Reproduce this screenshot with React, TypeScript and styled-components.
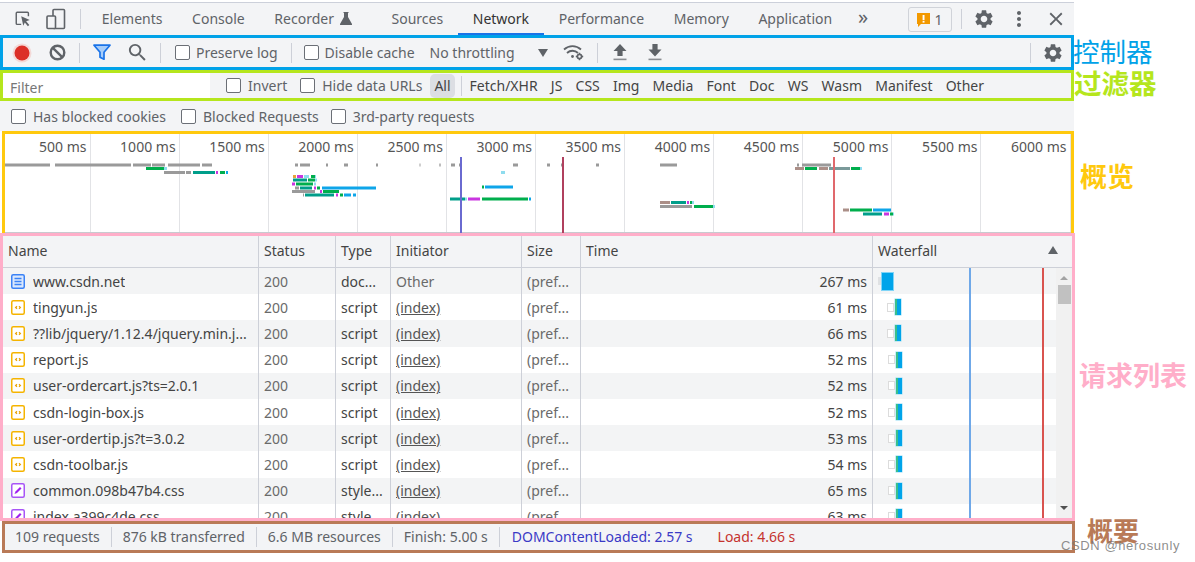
import React from "react";
import styled, { createGlobalStyle } from "styled-components";
import { MdSettings, MdClose, MdMoreVert, MdSearch } from "react-icons/md";

const Global = createGlobalStyle`
  html, body { margin: 0; padding: 0; background: #fff; }
  body { font-family: "Noto Sans", "Liberation Sans", sans-serif; font-size: 14px; color: #555; overflow: hidden; }
`;

const PANEL = "#f3f4f6";
const LINE = "#cdd0d8";

const Page = styled.div`
  position: relative;
  width: 1195px;
  height: 562px;
  padding-top: 2px;
  box-sizing: border-box;
  overflow: hidden;
`;
const Band = styled.div<{ $h: number }>`
  display: flex;
  height: ${(p) => p.$h}px;
  width: 1195px;
`;
const Framed = styled.div<{ $c: string; $w?: number; $ml?: number; $open?: boolean }>`
  box-sizing: border-box;
  width: ${(p) => p.$w ?? 1074}px;
  margin-left: ${(p) => p.$ml ?? 0}px;
  flex: none;
  border: 3px solid ${(p) => p.$c};
  border-bottom-width: ${(p) => (p.$open ? 0 : 3)}px;
  background: ${PANEL};
  display: flex;
  align-items: center;
  overflow: hidden;
`;
const Note = styled.div<{ $c: string; $s: number; $b?: boolean; $ml: number; $mt: number }>`
  font-family: "Noto Sans CJK SC", sans-serif;
  color: ${(p) => p.$c};
  font-size: ${(p) => p.$s}px;
  font-weight: ${(p) => (p.$b ? 700 : 400)};
  line-height: 1;
  margin-left: ${(p) => p.$ml}px;
  margin-top: ${(p) => p.$mt}px;
  white-space: nowrap;
`;

/* top tabs */
const TopBar = styled.div`
  width: 1074px;
  height: 33px;
  box-sizing: border-box;
  border-top: 1px solid #ccd0da;
  background: ${PANEL};
  display: flex;
  align-items: center;
`;
const Tab = styled.div<{ $active?: boolean; $extra?: number }>`
  flex: none;
  height: 32px;
  box-sizing: border-box;
  padding: 0 ${(p) => 14.8 + (p.$extra ?? 0)}px 0 14.8px;
  display: flex;
  align-items: center;
  gap: 6px;
  color: ${(p) => (p.$active ? "#333" : "#5f6368")};
  border-bottom: 2px solid ${(p) => (p.$active ? "#1a73e8" : "transparent")};
`;
const MoreTabs = styled.span`
  flex: none;
  margin-left: 11px;
  font-size: 20px;
  line-height: 1;
  padding-bottom: 4px;
  color: #5f6368;
`;
const IconSlot = styled.span<{ $w: number; $c?: string; $ml?: number }>`
  flex: none;
  width: ${(p) => p.$w}px;
  margin-left: ${(p) => p.$ml ?? 0}px;
  display: flex;
  align-items: center;
  justify-content: center;
  color: ${(p) => p.$c ?? "#5f6368"};
`;
const Sep = styled.span<{ $ml?: number; $mr?: number }>`
  flex: none;
  width: 1px;
  height: 20px;
  background: #cdd0d8;
  margin-left: ${(p) => p.$ml ?? 0}px;
  margin-right: ${(p) => p.$mr ?? 0}px;
`;
const Badge = styled.div`
  flex: none;
  width: 44px;
  height: 25px;
  box-sizing: border-box;
  border: 1px solid #d0d3d9;
  border-radius: 3px;
  display: flex;
  align-items: center;
  justify-content: center;
  gap: 4px;
  color: #5f6368;
`;
const Spacer = styled.span`
  flex: 1;
`;

/* checkboxes and labels */
const Check = styled.label<{ $ml?: number; $gap?: number }>`
  flex: none;
  display: flex;
  align-items: center;
  gap: ${(p) => p.$gap ?? 7}px;
  margin-left: ${(p) => p.$ml ?? 0}px;
  color: #5f6368;
  white-space: nowrap;
`;
const Square = styled.span`
  flex: none;
  width: 13px;
  height: 13px;
  border: 1px solid #6b6f76;
  border-radius: 2px;
  background: #fff;
`;
const Plain = styled.span<{ $ml?: number; $w?: number }>`
  flex: none;
  margin-left: ${(p) => p.$ml ?? 0}px;
  width: ${(p) => (p.$w ? p.$w + "px" : "auto")};
  white-space: nowrap;
  color: #5f6368;
`;
const Caret = styled.span`
  flex: none;
  width: 0;
  height: 0;
  border-left: 5px solid transparent;
  border-right: 5px solid transparent;
  border-top: 8px solid #5f6368;
`;

/* filter row */
const FilterInput = styled.div`
  flex: none;
  width: 207px;
  height: 100%;
  box-sizing: border-box;
  padding: 3px 0 0 7px;
  background: #fff;
  color: #777;
  display: flex;
  align-items: center;
`;
const Chip = styled.span<{ $on?: boolean }>`
  flex: none;
  height: 24px;
  display: flex;
  align-items: center;
  padding: 0 ${(p) => (p.$on ? 4 : 6.6)}px;
  border-radius: 5px;
  background: ${(p) => (p.$on ? "#dcdee3" : "transparent")};
  color: #444;
`;
const BlockedRow = styled.div`
  width: 1074px;
  height: 30px;
  box-sizing: border-box;
  background: ${PANEL};
  display: flex;
  align-items: center;
  padding-left: 11px;
`;

/* overview */
const Overview = styled.div`
  position: relative;
  flex: 1;
  height: 100%;
  background: #fff;
  display: grid;
  grid-template-columns: 85.5px repeat(11, 89.1px);
  border-bottom: 1px solid #c8cad0;
  box-sizing: border-box;
  align-self: stretch;
`;
const TimeCol = styled.div`
  border-right: 1px solid #e2e3e6;
  text-align: right;
  padding: 3px 3px 0 0;
  box-sizing: border-box;
  color: #555;
  white-space: nowrap;
  line-height: 20px;
`;
const OverlaySvg = styled.svg`
  position: absolute;
  left: 0;
  top: 0;
`;

/* table */
const Table = styled.div`
  flex: 1;
  align-self: stretch;
  display: flex;
  flex-direction: column;
  min-width: 0;
  background: #fff;
`;
const COLS = "255px 77px 55px 131px 59px 292px 1fr";
const HeadRow = styled.div`
  flex: none;
  height: 32px;
  box-sizing: border-box;
  display: grid;
  grid-template-columns: ${COLS};
  background: ${PANEL};
  border-bottom: 1px solid ${LINE};
  color: #444;
`;
const HeadCell = styled.div<{ $first?: boolean }>`
  display: flex;
  align-items: center;
  justify-content: space-between;
  padding: 0 14px 3px 5px;
  border-left: ${(p) => (p.$first ? "none" : `1px solid ${LINE}`)};
`;
const Body = styled.div`
  position: relative;
  flex: 1;
  min-height: 0;
  display: flex;
  overflow: hidden;
`;
const Rows = styled.div`
  flex: 1;
  min-width: 0;
`;
const Row = styled.div<{ $odd: boolean }>`
  height: 26.2px;
  display: grid;
  grid-template-columns: ${COLS};
  background: ${(p) => (p.$odd ? "#f3f4f5" : "#fff")};
`;
const Cell = styled.div<{ $first?: boolean; $right?: boolean; $dark?: boolean }>`
  display: flex;
  align-items: center;
  justify-content: ${(p) => (p.$right ? "flex-end" : "flex-start")};
  padding: 0 5px;
  gap: 8px;
  min-width: 0;
  white-space: nowrap;
  overflow: hidden;
  color: ${(p) => (p.$dark ? "#444" : "#6a6a6a")};
  border-left: ${(p) => (p.$first ? "none" : `1px solid ${LINE}`)};
`;
const Initiator = styled.span`
  text-decoration: underline;
  color: #555;
`;
const NameText = styled.span`
  color: #444;
  overflow: hidden;
  text-overflow: ellipsis;
`;
const FileIcon = styled.svg`
  flex: none;
  margin-left: 3px;
`;
const WaterCell = styled.div`
  border-left: 1px solid ${LINE};
  display: flex;
  align-items: center;
  min-width: 0;
`;
const Queue = styled.span<{ $ml: number }>`
  flex: none;
  width: 7px;
  height: 9px;
  margin-left: ${(p) => p.$ml}px;
  margin-right: 1px;
  border: 1px solid #dcdcdc;
  box-sizing: border-box;
  background: #fff;
`;
const Receive = styled.span`
  flex: none;
  width: 6px;
  height: 16px;
  box-sizing: border-box;
  border-left: 2px solid #3dbf8a;
  background: #00a4ea;
  box-shadow: 0 0 0 0.5px #8fdcf5;
`;
const Main = styled.span`
  flex: none;
  width: 11px;
  height: 17px;
  margin-left: 1px;
  background: #00a4ea;
  box-shadow: 0 0 0 1px #7fd4f7;
`;
const Stalled = styled.span`
  flex: none;
  width: 3px;
  height: 8px;
  margin-left: 5px;
  background: #dfe1e3;
`;
const Marker = styled.div<{ $x: number; $c: string }>`
  position: absolute;
  top: 0;
  bottom: 0;
  left: ${(p) => p.$x}px;
  width: 2px;
  background: ${(p) => p.$c};
`;
const Scrollbar = styled.div`
  flex: none;
  width: 16px;
  background: #f1f1f1;
  display: flex;
  flex-direction: column;
  align-items: center;
  justify-content: space-between;
  position: relative;
  padding: 8px 0 8px;
  box-sizing: border-box;
`;
const ScrollThumb = styled.div`
  position: absolute;
  left: 2px;
  top: 17px;
  width: 13px;
  height: 19px;
  background: #c1c1c1;
`;
const ArrowUp = styled.span`
  width: 0;
  height: 0;
  border-left: 4px solid transparent;
  border-right: 4px solid transparent;
  border-bottom: 4px solid #a3a3a3;
`;
const ArrowDown = styled.span`
  width: 0;
  height: 0;
  border-left: 4px solid transparent;
  border-right: 4px solid transparent;
  border-top: 4px solid #505050;
`;
const SortArrow = styled.span`
  width: 0;
  height: 0;
  border-left: 5px solid transparent;
  border-right: 5px solid transparent;
  border-bottom: 8px solid #5f6368;
`;

/* summary */
const SummaryItem = styled.span<{ $c?: string; $sep?: boolean; $pl?: number; $pr?: number }>`
  flex: none;
  padding: 0 ${(p) => p.$pr ?? 11}px 0 ${(p) => p.$pl ?? 11}px;
  height: 20px;
  line-height: 20px;
  color: ${(p) => p.$c ?? "#5f6368"};
  border-right: ${(p) => (p.$sep ? `1px solid ${LINE}` : "none")};
  white-space: nowrap;
`;
const Watermark = styled.div`
  position: absolute;
  left: 1061px;
  top: 538px;
  font-family: "Liberation Sans", sans-serif;
  font-size: 13px;
  letter-spacing: 0.6px;
  color: rgba(120, 120, 120, 0.85);
  white-space: nowrap;
`;

const InspectIcon = () => (
  <svg width="18" height="18" viewBox="0 0 20 20" fill="none">
    <path d="M8 16H3.5a1 1 0 0 1-1-1V3.5a1 1 0 0 1 1-1H15a1 1 0 0 1 1 1V7" stroke="#5f6368" strokeWidth="1.6" />
    <path d="M8 7l9.5 4-4 1.6 3.5 4-1.6 1.4-3.4-4-1.7 3.6z" fill="#5f6368" />
  </svg>
);
const DeviceIcon = () => (
  <svg width="20" height="22" viewBox="0 0 20 22" fill="none" stroke="#5f6368" strokeWidth="1.6">
    <rect x="7" y="1.5" width="11.5" height="19" rx="1" />
    <rect x="1" y="8" width="8.5" height="12.5" rx="1" fill={PANEL} />
  </svg>
);
const Flask = () => (
  <svg width="12" height="13" viewBox="0 0 12 13">
    <path d="M3.5 0h5v1H8v4l4 7a.7.7 0 0 1-.6 1H.6a.7.7 0 0 1-.6-1l4-7V1h-.5z" fill="#5f6368" />
  </svg>
);
const IssueIcon = () => (
  <svg width="13" height="15" viewBox="0 0 13 15">
    <path d="M0 1h13v11H4l-3 3v-3H0z" fill="#f29900" />
    <rect x="5.6" y="3" width="1.9" height="5" fill="#fff" />
    <rect x="5.6" y="8.8" width="1.9" height="1.8" fill="#fff" />
  </svg>
);
const RecordIcon = () => (
  <svg width="20" height="20" viewBox="0 0 20 20">
    <circle cx="10" cy="10" r="9.5" fill="#f4c7c3" opacity="0.6" />
    <circle cx="10" cy="10" r="7.5" fill="#dc2f27" />
  </svg>
);
const ClearIcon = () => (
  <svg width="17" height="17" viewBox="0 0 17 17" fill="none" stroke="#5f6368" strokeWidth="2.4">
    <circle cx="8.5" cy="8.5" r="6.8" />
    <path d="M3.8 3.8l9.4 9.4" />
  </svg>
);
const FunnelIcon = () => (
  <svg width="18" height="17" viewBox="0 0 18 17">
    <path d="M1 1.2h16l-6 7v7l-4-2v-5z" fill="#a6cdfa" stroke="#1a73e8" strokeWidth="1.7" strokeLinejoin="round" />
  </svg>
);
const WifiGearIcon = () => (
  <svg width="22" height="17" viewBox="0 0 22 17" fill="none" stroke="#5f6368" strokeWidth="1.8">
    <path d="M1 5.5c5-4.6 12-4.6 17 0" />
    <path d="M4 9c3.2-3 8-3 11 0" />
    <circle cx="9.5" cy="12.5" r="1.4" fill="#5f6368" stroke="none" />
    <circle cx="16.5" cy="12.5" r="2.1" strokeWidth="1.7" />
    <path d="M16.5 8.8v1.4M16.5 14.8v1.4M12.8 12.5h1.4M18.8 12.5h1.4" strokeWidth="1.4" />
  </svg>
);
const UploadIcon = () => (
  <svg width="14" height="17" viewBox="0 0 14 17">
    <path d="M7 0l6.5 7H9.6v5H4.4V7H.5z" fill="#5f6368" />
    <rect x="0.5" y="14.6" width="13" height="1.6" fill="#8a8d92" />
  </svg>
);
const DownloadIcon = () => (
  <svg width="14" height="17" viewBox="0 0 14 17">
    <path d="M7 12.5L.5 5.5h3.9V0h5.2v5.5h3.9z" fill="#5f6368" />
    <rect x="0.5" y="14.6" width="13" height="1.6" fill="#8a8d92" />
  </svg>
);
const DocIcon = () => (
  <FileIcon width="14" height="15" viewBox="0 0 14 15">
    <rect x="0.75" y="0.75" width="12.5" height="13.5" rx="1.5" fill="#dbe8fd" stroke="#3b82f6" strokeWidth="1.5" />
    <path d="M3.5 4.5h7M3.5 7.5h7M3.5 10.5h7" stroke="#3b82f6" strokeWidth="1.3" />
  </FileIcon>
);
const ScriptIcon = () => (
  <FileIcon width="14" height="15" viewBox="0 0 14 15">
    <rect x="0.75" y="0.75" width="12.5" height="13.5" rx="1.5" fill="#fff" stroke="#f5b400" strokeWidth="1.5" />
    <path d="M6 6.2L4.6 7.5 6 8.8M8 6.2l1.4 1.3L8 8.8" fill="none" stroke="#e8a200" strokeWidth="1.2" />
  </FileIcon>
);
const CssIcon = () => (
  <FileIcon width="14" height="15" viewBox="0 0 14 15">
    <rect x="0.75" y="0.75" width="12.5" height="13.5" rx="1.5" fill="#fff" stroke="#a855f7" strokeWidth="1.5" />
    <path d="M3.5 11l1-2.5 4.5-4.5 1.5 1.5L6 10z" fill="#a020f0" />
  </FileIcon>
);

type Kind = "doc" | "script" | "css";
const rows: { n: string; t: string; i: string; ms: string; k: Kind }[] = [
  { n: "www.csdn.net", t: "doc...", i: "Other", ms: "267 ms", k: "doc" },
  { n: "tingyun.js", t: "script", i: "(index)", ms: "61 ms", k: "script" },
  { n: "??lib/jquery/1.12.4/jquery.min.j...", t: "script", i: "(index)", ms: "66 ms", k: "script" },
  { n: "report.js", t: "script", i: "(index)", ms: "52 ms", k: "script" },
  { n: "user-ordercart.js?ts=2.0.1", t: "script", i: "(index)", ms: "52 ms", k: "script" },
  { n: "csdn-login-box.js", t: "script", i: "(index)", ms: "52 ms", k: "script" },
  { n: "user-ordertip.js?t=3.0.2", t: "script", i: "(index)", ms: "53 ms", k: "script" },
  { n: "csdn-toolbar.js", t: "script", i: "(index)", ms: "54 ms", k: "script" },
  { n: "common.098b47b4.css", t: "style...", i: "(index)", ms: "65 ms", k: "css" },
  { n: "index.a399c4de.css", t: "style...", i: "(index)", ms: "63 ms", k: "css" },
];
const waterOffsets = [0, 14, 14, 15, 15, 15, 15, 15, 15, 15];

const GRAY = "#9a9a9a";
const TEAL = "#009e8a";
const GREEN = "#00ae4d";
const BLUE = "#0ea5e9";
const PURPLE = "#c935e0";
const BROWN = "#ab8f88";
const LIGHT = "#8fdcee";
// x1, x2, y, colour (page coordinates)
const bars: [number, number, number, string][] = [
  [5, 50, 165, GRAY], [55, 131, 165, GRAY], [133, 151, 165, GRAY], [152, 165, 165, GRAY], [168, 200, 165, GRAY], [202, 212, 165, GRAY],
  [146, 164, 168.5, GREEN], [164, 167, 168.5, LIGHT],
  [164, 185, 172.5, GRAY], [186, 191, 172.5, GRAY], [193, 215, 172.5, TEAL], [216, 218, 172.5, PURPLE], [220, 225, 172.5, GREEN], [226, 228, 172.5, BLUE],
  [295, 298, 165, GRAY], [300, 310, 165, GRAY], [326, 328, 165, GRAY], [344, 348, 165, GRAY], [376, 378, 165, GRAY],
  [293, 296, 176.5, "#e6a23c"], [297, 303, 176.5, PURPLE], [304, 309, 176.5, LIGHT], [311, 315, 176.5, GREEN], [315, 316, 176.5, LIGHT],
  [293, 307, 180, TEAL], [308, 315, 180, GREEN], [315, 317, 180, LIGHT],
  [292, 295, 184, PURPLE], [296, 313, 184, GREEN], [314, 316, 184, LIGHT],
  [295, 299, 188, GRAY], [300, 312, 188, TEAL], [314, 316, 188, PURPLE], [317, 320, 188, GREEN], [322, 376, 188, BLUE],
  [292, 315, 191.5, GRAY], [320, 322, 191.5, PURPLE], [323, 339, 191.5, GREEN],
  [303, 304, 195, GRAY], [305, 334, 195, TEAL], [336, 338, 195, PURPLE], [340, 343, 195, GREEN], [344, 351, 195, BLUE], [353, 356, 195, BLUE],
  [419, 421, 165, "#cfcfcf"], [439, 441, 165, "#bdbdbd"], [451, 455, 165, GRAY], [459, 461, 165, GRAY], [513, 518, 165, GRAY], [547, 550, 165, GRAY], [561, 563, 165, GRAY], [596, 599, 165, GRAY], [660, 677, 165, GRAY],
  [501, 505, 172.5, LIGHT],
  [482, 484, 187, GREEN], [485, 513, 187, BLUE],
  [450, 465, 199, TEAL], [465, 467, 199, LIGHT], [468, 480, 199, PURPLE], [482, 528, 199, GREEN], [529, 531, 199, BLUE],
  [660, 670, 202.5, BROWN], [671, 686, 202.5, TEAL], [687, 689, 202.5, PURPLE], [690, 692, 202.5, GREEN], [692, 694, 202.5, LIGHT],
  [660, 692, 206.5, GRAY], [694, 713, 206.5, GREEN], [713, 715, 206.5, LIGHT],
  [797, 799, 165, GRAY], [802, 831, 165, GRAY],
  [795, 804, 168.5, BROWN], [805, 817, 168.5, GREEN], [819, 828, 168.5, BROWN], [829, 850, 168.5, "#7a9a9a"], [851, 860, 168.5, GREEN], [860, 862, 168.5, LIGHT],
  [843, 849, 210, BROWN], [850, 872, 210, GREEN], [873, 891, 210, BLUE],
  [863, 882, 214, TEAL], [884, 889, 214, PURPLE], [890, 893, 214, GREEN], [893, 894, 214, LIGHT],
];
const times = [500, 1000, 1500, 2000, 2500, 3000, 3500, 4000, 4500, 5000, 5500, 6000];

export default function App() {
  return (
    <Page>
      <Global />
      <TopBar>
        <IconSlot $w={45}><InspectIcon /></IconSlot>
        <IconSlot $w={21}><DeviceIcon /></IconSlot>
        <Sep $ml={14} $mr={6} />
        <Tab>Elements</Tab>
        <Tab>Console</Tab>
        <Tab $extra={10}>Recorder <Flask /></Tab>
        <Tab>Sources</Tab>
        <Tab $active>Network</Tab>
        <Tab>Performance</Tab>
        <Tab>Memory</Tab>
        <Tab>Application</Tab>
        <MoreTabs>»</MoreTabs>
        <Spacer />
        <Badge><IssueIcon />1</Badge>
        <Sep $ml={9} />
        <IconSlot $w={44}><MdSettings size={22} /></IconSlot>
        <IconSlot $w={26}><MdMoreVert size={24} /></IconSlot>
        <IconSlot $w={22} $ml={13}><MdClose size={22} /></IconSlot>
        <IconSlot $w={7} />
      </TopBar>

      <Band $h={35}>
        <Framed $c="#00a2e8">
          <IconSlot $w={38}><RecordIcon /></IconSlot>
          <IconSlot $w={32}><ClearIcon /></IconSlot>
          <Sep $ml={6} />
          <IconSlot $w={44}><FunnelIcon /></IconSlot>
          <IconSlot $w={26}><MdSearch size={23} /></IconSlot>
          <Sep $ml={10} />
          <Check $ml={14} $gap={6}><Square />Preserve log</Check>
          <Sep $ml={13} />
          <Check $ml={12} $gap={6}><Square />Disable cache</Check>
          <Plain $ml={15} $w={108}>No throttling</Plain>
          <Caret />
          <IconSlot $w={46} $ml={3}><WifiGearIcon /></IconSlot>
          <Sep />
          <IconSlot $w={44}><UploadIcon /></IconSlot>
          <IconSlot $w={26}><DownloadIcon /></IconSlot>
          <Spacer />
          <Sep />
          <IconSlot $w={36} $ml={4}><MdSettings size={22} /></IconSlot>
        </Framed>
        <Note $c="#00a2e8" $s={26.5} $mt={3} $ml={-1}>控制器</Note>
      </Band>

      <Band $h={31}>
        <Framed $c="#b5e61d">
          <FilterInput>Filter</FilterInput>
          <Check $ml={16}><Square />Invert</Check>
          <Check $ml={13}><Square />Hide data URLs</Check>
          <Plain $ml={8} />
          <Chip $on>All</Chip>
          <Sep $ml={6} $mr={1.4} />
          <Chip>Fetch/XHR</Chip>
          <Chip>JS</Chip>
          <Chip>CSS</Chip>
          <Chip>Img</Chip>
          <Chip>Media</Chip>
          <Chip>Font</Chip>
          <Chip>Doc</Chip>
          <Chip>WS</Chip>
          <Chip>Wasm</Chip>
          <Chip>Manifest</Chip>
          <Chip>Other</Chip>
        </Framed>
        <Note $c="#b5e61d" $s={27.5} $b $ml={0} $mt={-1}>过滤器</Note>
      </Band>

      <BlockedRow>
        <Check><Square />Has blocked cookies</Check>
        <Check $ml={15}><Square />Blocked Requests</Check>
        <Check $ml={12}><Square />3rd-party requests</Check>
      </BlockedRow>

      <Band $h={102}>
        <Framed $c="#ffc90e" $w={1072} $ml={2} $open>
          <Overview>
            {times.map((t) => (
              <TimeCol key={t}>{t} ms</TimeCol>
            ))}
            <OverlaySvg width="1065" height="99" viewBox="5 134 1065 99">
              {bars.map(([a, b, y, c], i) => (
                <rect key={i} x={a} y={y - 1.5} width={b - a} height={3} fill={c} />
              ))}
              <rect x="460" y="157" width="2" height="76" fill="#6a6ad0" />
              <rect x="562" y="157" width="2" height="76" fill="#b0405e" />
              <rect x="833" y="157" width="2" height="76" fill="#e0686c" />
            </OverlaySvg>
          </Overview>
        </Framed>
        <Note $c="#ffc90e" $s={27} $b $ml={6} $mt={31}>概览</Note>
      </Band>

      <Band $h={288}>
        <Framed $c="#ffaec9" $w={1075}>
          <Table>
            <HeadRow>
              <HeadCell $first>Name</HeadCell>
              <HeadCell>Status</HeadCell>
              <HeadCell>Type</HeadCell>
              <HeadCell>Initiator</HeadCell>
              <HeadCell>Size</HeadCell>
              <HeadCell>Time</HeadCell>
              <HeadCell>Waterfall<SortArrow /></HeadCell>
            </HeadRow>
            <Body>
              <Rows>
                {rows.map((r, i) => (
                  <Row key={r.n} $odd={i % 2 === 0}>
                    <Cell $first>
                      {r.k === "doc" ? <DocIcon /> : r.k === "script" ? <ScriptIcon /> : <CssIcon />}
                      <NameText>{r.n}</NameText>
                    </Cell>
                    <Cell>200</Cell>
                    <Cell $dark>{r.t}</Cell>
                    <Cell>{i === 0 ? r.i : <Initiator>{r.i}</Initiator>}</Cell>
                    <Cell>(pref...</Cell>
                    <Cell $right $dark>{r.ms}</Cell>
                    <WaterCell>
                      {i === 0 ? (
                        <>
                          <Stalled />
                          <Main />
                        </>
                      ) : (
                        <>
                          <Queue $ml={waterOffsets[i]} />
                          <Receive />
                        </>
                      )}
                    </WaterCell>
                  </Row>
                ))}
              </Rows>
              <Scrollbar>
                <ArrowUp />
                <ScrollThumb />
                <ArrowDown />
              </Scrollbar>
              <Marker $x={966} $c="#6fa8e8" />
              <Marker $x={1039} $c="#d9534f" />
            </Body>
          </Table>
        </Framed>
        <Note $c="#ffaec9" $s={27} $b $ml={4} $mt={128}>请求列表</Note>
      </Band>

      <Band $h={32}>
        <Framed $c="#b97a57" $w={1073} $ml={2}>
          <SummaryItem $sep $pl={10}>109 requests</SummaryItem>
          <SummaryItem $sep>876 kB transferred</SummaryItem>
          <SummaryItem $sep>6.6 MB resources</SummaryItem>
          <SummaryItem $sep>Finish: 5.00 s</SummaryItem>
          <SummaryItem $c="#3a3ac6" $pl={12} $pr={14}>DOMContentLoaded: 2.57 s</SummaryItem>
          <SummaryItem $c="#c5332e">Load: 4.66 s</SummaryItem>
        </Framed>
        <Note $c="#b97a57" $s={26} $b $ml={12} $mt={-4}>概要</Note>
      </Band>
      <Watermark>CSDN @herosunly</Watermark>
    </Page>
  );
}
